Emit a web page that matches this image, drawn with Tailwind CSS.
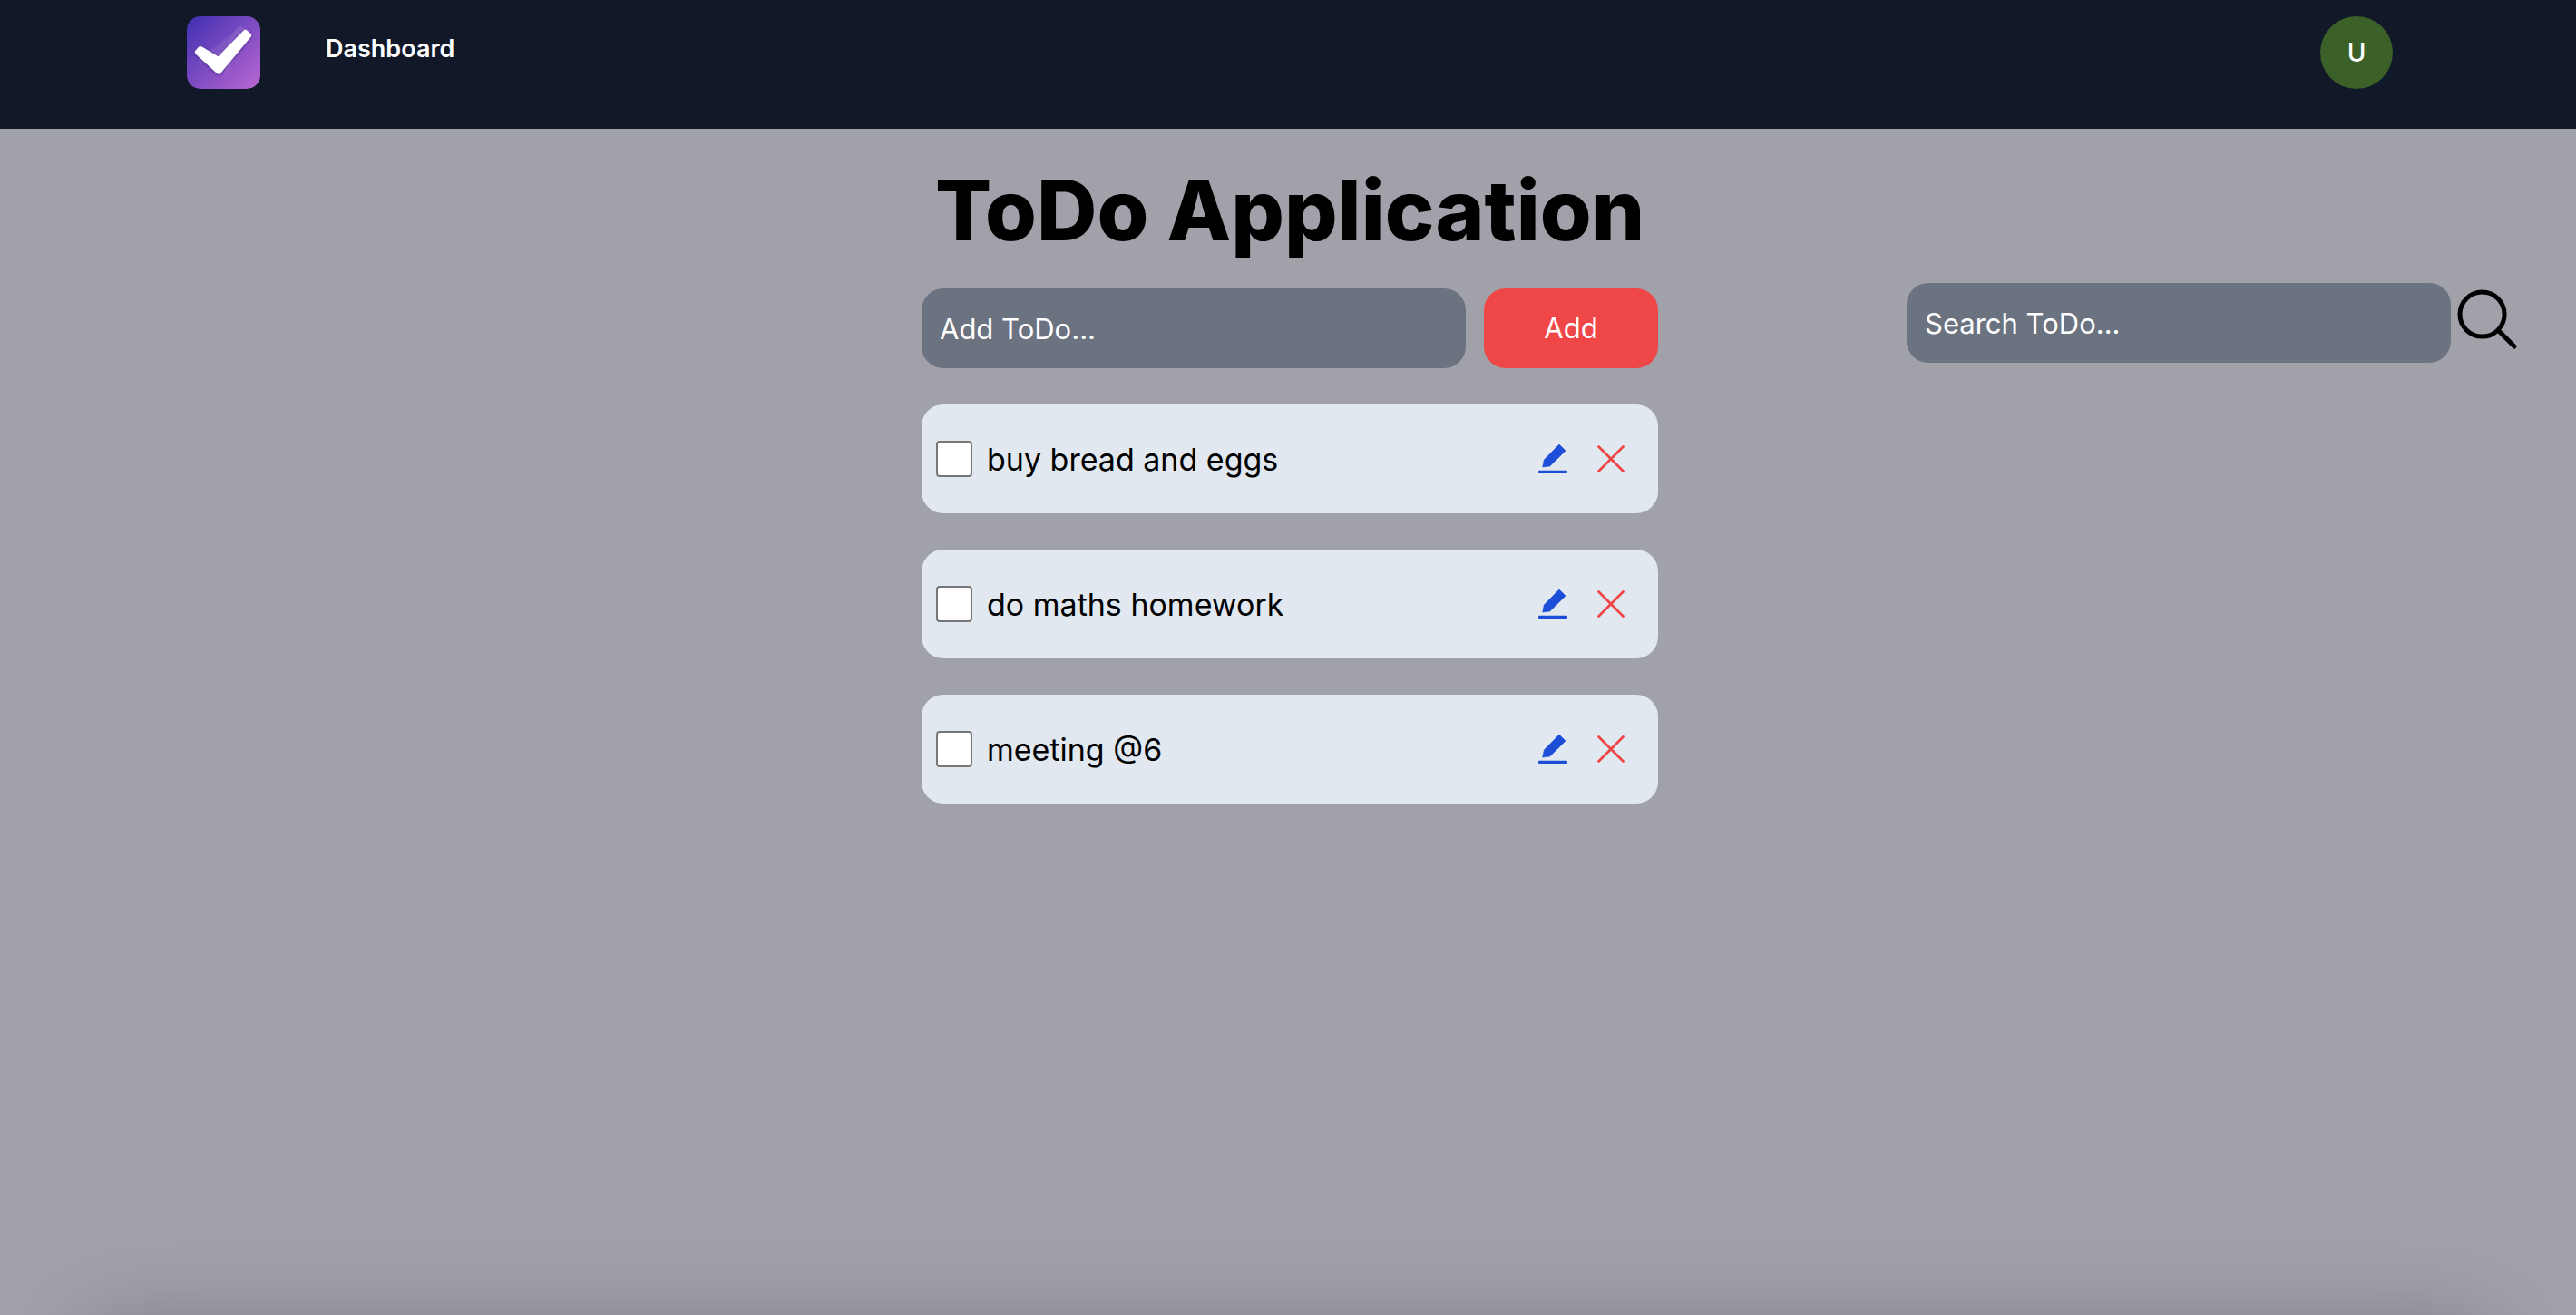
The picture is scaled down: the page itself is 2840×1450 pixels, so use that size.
<!DOCTYPE html>
<html lang="en">
<head>
<meta charset="utf-8">
<meta name="viewport" content="width=device-width, initial-scale=1">
<title>ToDo Application</title>
<script src="https://cdn.jsdelivr.net/npm/@tailwindcss/browser@4"></script>
</head>
<body class="flex min-h-screen flex-col bg-[#a1a1aa] font-['Inter',sans-serif] text-black">
  <svg class="hidden" aria-hidden="true">
    <symbol id="edit" viewBox="0 0 32 32"><rect y="28.700" width="32" height="3.200" rx="1"/><path d="M23 0l7 7-17.300 17-8 1 1.600-8z" stroke="currentColor" stroke-width=".6"/></symbol>
    <symbol id="close" viewBox="0 0 32 32"><path d="M2.500 2.500l27 27M29.500 2.500l-27 27" fill="none" stroke="currentColor" stroke-width="2.700" stroke-linecap="round"/></symbol>
  </svg>

  <header class="flex h-[142px] items-start justify-between bg-[#111827] pt-[18px] pr-[202px] pl-[206px]">
    <nav class="flex gap-[72px]">
      <a href="#" aria-label="Home">
        <svg class="size-[81px]" viewBox="0 0 81 81">
          <defs>
            <linearGradient id="bg" x1="0" y1="0" x2="1" y2="1"><stop offset="0" stop-color="#3f2fb0"/><stop offset="1" stop-color="#bb68d3"/></linearGradient>
            <filter id="sh" x="-20%" y="-20%" width="140%" height="140%"><feDropShadow dx="0" dy="1" stdDeviation="1.500" flood-color="#2a1560" flood-opacity=".6"/></filter>
          </defs>
          <rect width="81" height="80" rx="15" fill="url(#bg)"/>
          <path d="M58 12L35 54 13 48M58 12l8 4L42 63" fill="#fff" fill-opacity=".08" stroke="#fff" stroke-opacity=".08" stroke-width="4" stroke-linejoin="round"/>
          <path d="M15 36L35 48 64.500 18 68 21 35 60.500 12 39.500z" fill="#fff" stroke="#fff" stroke-width="6" stroke-linejoin="round" filter="url(#sh)"/>
        </svg>
      </a>
      <a href="#" class="pt-4 text-[27px] leading-10 font-semibold text-white">Dashboard</a>
    </nav>
    <button class="size-20 rounded-full bg-[#3b6128] text-[28px] font-medium text-white">U</button>
  </header>

  <main class="relative flex flex-1 flex-col items-center overflow-hidden pt-[42px] pl-1">
    <div class="flex w-[812px] flex-col">
      <h1 class="text-center text-[92px] leading-24 font-extrabold">ToDo Application</h1>
      <form class="mt-[38px] flex gap-5">
        <input type="text" aria-label="Add ToDo" placeholder="Add ToDo..." class="h-[88px] w-[600px] rounded-3xl bg-[#6b7280] px-5 text-[31px] text-white placeholder:text-white">
        <button type="button" class="flex-1 rounded-3xl bg-[#ef4648] text-[31px] text-white">Add</button>
      </form>
      <ul class="mt-10 flex flex-col gap-10">
        <li class="flex h-[120px] items-center rounded-3xl bg-[#e2e8f0] pr-9 pl-4 text-[34px]">
          <input id="t1" type="checkbox" class="size-10 appearance-none rounded border-2 border-[#767676] bg-white">
          <label for="t1" class="flex-1 pl-4">buy bread and eggs</label>
          <button aria-label="Edit" class="text-[#1d4ed8]"><svg class="size-8 fill-current"><use href="#edit"/></svg></button>
          <button aria-label="Delete" class="ml-8 text-[#ef4444]"><svg class="size-8"><use href="#close"/></svg></button>
        </li>
        <li class="flex h-[120px] items-center rounded-3xl bg-[#e2e8f0] pr-9 pl-4 text-[34px]">
          <input id="t2" type="checkbox" class="size-10 appearance-none rounded border-2 border-[#767676] bg-white">
          <label for="t2" class="flex-1 pl-4">do maths homework</label>
          <button aria-label="Edit" class="text-[#1d4ed8]"><svg class="size-8 fill-current"><use href="#edit"/></svg></button>
          <button aria-label="Delete" class="ml-8 text-[#ef4444]"><svg class="size-8"><use href="#close"/></svg></button>
        </li>
        <li class="flex h-[120px] items-center rounded-3xl bg-[#e2e8f0] pr-9 pl-4 text-[34px]">
          <input id="t3" type="checkbox" class="size-10 appearance-none rounded border-2 border-[#767676] bg-white">
          <label for="t3" class="flex-1 pl-4">meeting @6</label>
          <button aria-label="Edit" class="text-[#1d4ed8]"><svg class="size-8 fill-current"><use href="#edit"/></svg></button>
          <button aria-label="Delete" class="ml-8 text-[#ef4444]"><svg class="size-8"><use href="#close"/></svg></button>
        </li>
      </ul>
    </div>
    <form class="absolute top-[170px] right-[58px] flex">
      <input type="search" aria-label="Search ToDo" placeholder="Search ToDo..." class="h-[88px] w-[600px] rounded-3xl bg-[#6b7280] px-5 text-[31px] text-white placeholder:text-white">
      <button type="button" aria-label="Search" class="size-20">
        <svg class="size-20" viewBox="0 0 512 512" fill="none" stroke="#000" stroke-width="32"><circle cx="221.100" cy="221.100" r="157.100"/><path d="M338.300 338.300L448 448" stroke-linecap="round"/></svg>
      </button>
    </form>
    <div class="absolute inset-x-[96px] top-full h-40 rounded-3xl shadow-[0_16px_100px_rgba(0,0,0,0.25)]"></div>
  </main>
</body>
</html>
